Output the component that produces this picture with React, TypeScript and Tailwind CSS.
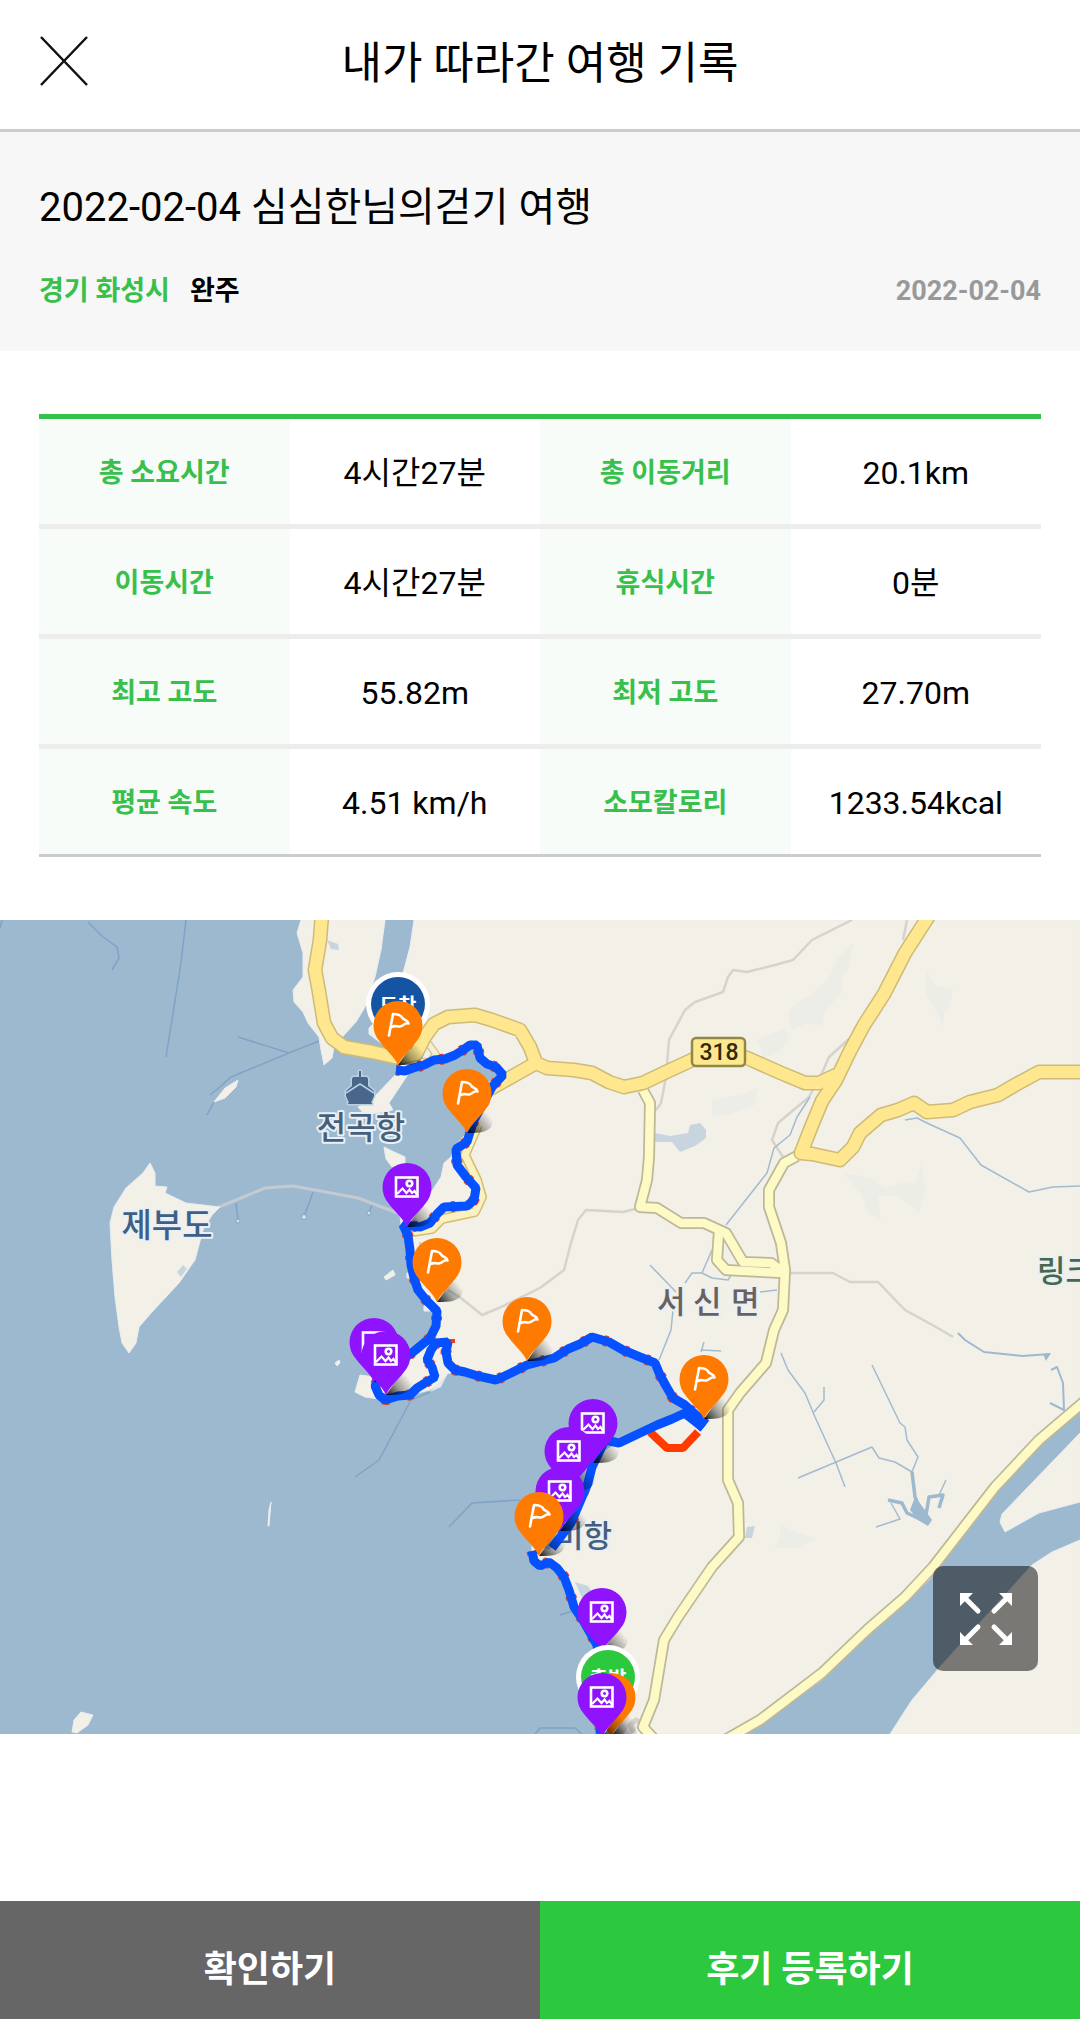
import React from "react";

type Point = { x: number; y: number };
type MarkerKind = "flag" | "photo";

const stats = [
  [
    { label: "총 소요시간", value: "4시간27분" },
    { label: "총 이동거리", value: "20.1km" },
  ],
  [
    { label: "이동시간", value: "4시간27분" },
    { label: "휴식시간", value: "0분" },
  ],
  [
    { label: "최고 고도", value: "55.82m" },
    { label: "최저 고도", value: "27.70m" },
  ],
  [
    { label: "평균 속도", value: "4.51 km/h" },
    { label: "소모칼로리", value: "1233.54kcal" },
  ],
];

// Later markers are drawn on top of earlier ones
const markers: (Point & { kind: MarkerKind })[] = [
  { kind: "flag", x: 398, y: 105 },
  { kind: "flag", x: 467, y: 173 },
  { kind: "photo", x: 407, y: 267 },
  { kind: "flag", x: 437, y: 342 },
  { kind: "flag", x: 527, y: 401 },
  { kind: "photo", x: 374, y: 422 },
  { kind: "photo", x: 386, y: 435 },
  { kind: "flag", x: 704, y: 459 },
  { kind: "photo", x: 593, y: 503 },
  { kind: "photo", x: 569, y: 531 },
  { kind: "photo", x: 560, y: 571 },
  { kind: "flag", x: 539, y: 596 },
  { kind: "photo", x: 602, y: 692 },
];

const ROUTE =
  "M396 150L405 151L413 148L424 145L434 140L445 139L455 135L463 130L470 125L477 125L480 138L487 144L496 147L503 155L492 167L474 200L470 212L467 222L456 229L457 245L466 257L476 268L474 280L467 286L444 287L437 294L430 303L420 307L403 305L408 316L410 330L411 345L414 358L418 370L426 380L437 391L436 406L430 418L413 432L380 455L375 466L379 475L385 480L398 476L410 475L417 468L425 463L435 457L432 447L427 440L431 430L436 423L448 422L446 432L448 443L455 450L465 452L478 456L496 460L511 453L527 445L554 438L568 429L580 424L592 417L609 422L623 430L640 437L655 443L660 455L666 466L673 478L685 485L705 503";

const ROUTE_BACK =
  "M703 508L695 500L685 493L672 499L657 505L640 513L619 523L605 520L592 547L588 563L571 603L552 628";

const ROUTE_SOUTH = "M532 631L534 641L540 646L549 642L557 648L564 657L569 670L574 687L584 702L597 725L602 770L600 814";

const MAJOR_ROADS = [
  "M322 -6L320 20L315 50L319 72L324 103L332 118L344 127L372 132L399 138L416 134L424 118L434 104L448 97L475 95L492 100L520 110L530 127L536 143L547 148L574 150L592 153L609 162L624 167L643 163L664 153L692 140L717 128L747 138L781 153L805 163L819 163L836 155",
  "M490 169L513 156L536 143",
  "M930 -6L905 33L884 74L864 105L850 131L836 160L822 181L812 205L801 233L812 234L840 240L853 227L860 213L881 195L898 190L914 183L927 192L953 190L970 182L998 175L1015 165L1039 152L1086 152",
];

const MINOR_ROADS = [
  "M643 170L650 183L649 237L647 260L640 287L657 288L681 303L704 303L726 313L743 342L771 343L783 352",
  "M719 311L717 340L726 350L783 353",
  "M797 236L784 243L769 270L769 287L781 323L785 350L783 390L774 410L766 443L740 473L728 490L728 560L738 583L739 617L712 647L678 697L664 720L654 780L643 807L655 820",
  "M725 820L760 800L822 753L867 710L905 677L933 647L995 567L1039 520L1086 480",
];

const COAST_ROAD = "M478 205L465 235L477 260L482 277L475 292L442 299L432 309L412 312";

const TRAILS =
  "M852 0L812 20L793 40L775 45L747 52L733 50L728 57L723 72L695 82L685 90L669 120L666 157L661 183L656 190M635 289L623 292L586 290L578 300L571 323L564 350L540 368L499 388L482 395L461 378L448 370M420 345L420 322M790 353L833 353L850 362L878 362L905 390L936 407L953 417M850 118L829 137L822 153L809 177L778 203L772 220L783 237M907 0L903 20";

const STREAMS =
  "M905 200L917 198L929 204L960 218L981 245L1029 272L1053 267L1080 266M810 177L797 197L790 215L774 228L767 253L726 305M712 330L702 353L692 353L685 363M650 345L676 372M702 353L712 358L728 360L733 352M673 390L671 410L665 425L659 440M704 422L701 432M702 430L721 431M781 433L788 450L805 473L815 497L836 543L845 567M824 467L824 480L814 492M798 558L872 527L879 538L895 542L912 552M872 445L900 503L905 507L907 520L918 537L912 552M876 607L900 599L891 583M946 560L939 575M760 372L777 370";

const WIDE_STREAMS =
  "M912 552L915 577L922 593L929 603M888 580L902 583L907 593L922 600M926 595L929 577L943 575L939 588";

const DITCHES = "M958 413L965 420L984 432L1022 436L1050 434M1051 450L1057 447L1063 463L1064 490L1050 483";

const SEA_LINES =
  "M88 2L103 17L117 27L119 38L112 50M186 0L181 43L166 137M238 117L289 133L319 121M289 133L231 157L220 167L210 175M214 182L207 195M236 283L238 300M313 272L304 297M372 285L369 293M430 472L411 480L379 540L355 557M449 607L472 583L520 580M535 814L540 808L575 808L582 814M2 0L0 8M560 695L576 690";

function PinShape({ x, y, color }: Point & { color: string }) {
  return (
    <g transform={`translate(${x} ${y})`}>
      <path d="M0 40L14 20C24 18 30 24 24 34C20 39 14 40 0 40Z" fill="url(#pin-shadow)" />
      <path d="M0 40C-4 31 -12 25 -18 17A24.5 24.5 0 1 1 18 17C12 25 4 31 0 40Z" fill={color} />
    </g>
  );
}

function Marker({ kind, x, y }: Point & { kind: MarkerKind }) {
  return (
    <g>
      <PinShape x={x} y={y} color={kind === "flag" ? "#ff7a00" : "#9013fe"} />
      <g transform={`translate(${x} ${y})`} fill="none" stroke="#fff" strokeWidth="2.600">
        {kind === "flag" ? (
          <path
            d="M-9 10.500L-5 -11C-1 -11 3 -10 4.500 -7C6 -4.500 9.500 -5.500 10.500 -1.500C7 -3 6 1 2 1.500C-1 1.800 -3 0 -6 2"
            strokeLinecap="round"
            strokeLinejoin="round"
          />
        ) : (
          <>
            <rect x="-11" y="-9.500" width="21.500" height="19" />
            <circle cx="2.500" cy="-3.500" r="2.800" />
            <path d="M-10 7L-4.500 1.500L-0.500 6L2.500 2.500L5 6L7.500 4L10 8" strokeWidth="2.200" />
          </>
        )}
      </g>
    </g>
  );
}

function EndPoint({ x, y, color, label }: Point & { color: string; label: string }) {
  return (
    <g>
      <path d={`M${x - 31} ${y}L${x - 4} ${y + 45}L${x + 31} ${y}Z`} fill="#fff" />
      <circle cx={x} cy={y} r="32" fill="#fff" />
      <circle cx={x} cy={y} r="27" fill={color} />
      <text x={x} y={y + 9} textAnchor="middle" fontSize="20" fontWeight="700" fill="#fff">
        {label}
      </text>
    </g>
  );
}

function RouteMap() {
  return (
    <svg viewBox="0 0 1080 814" className="block h-auto w-full" role="img" aria-label="여행 경로 지도">
      <defs>
        <linearGradient id="pin-shadow" x1="0" y1="1" x2="1" y2="0.4">
          <stop offset="0" stopColor="#000" stopOpacity="0.9" />
          <stop offset="0.5" stopColor="#000" stopOpacity="0.35" />
          <stop offset="1" stopColor="#000" stopOpacity="0" />
        </linearGradient>
      </defs>

      <rect width="1080" height="814" fill="#9db9d0" />
      <path d={SEA_LINES} fill="none" stroke="#7fa3c6" strokeWidth="1.500" />
      <path d="M219 287L241 278L265 268L293 266L331 273L358 278L403 295" fill="none" stroke="#c3cad2" strokeWidth="3" />
      <g fill="#d5e6f3" stroke="#7fa3c6">
        <circle cx="238" cy="301" r="2" />
        <circle cx="304" cy="297" r="2.500" />
        <circle cx="369" cy="293" r="2" />
      </g>

      {/* Land */}
      <g fill="#f3f0e8" stroke="#e9edf0" strokeWidth="1">
        <path d="M301 0L297 13L303 33L303 57L293 70L294 82L303 92L308 103L319 117L321 130L324 145L332 138L334 127L345 114L356 102L365 87L375 57L381 30L385 0Z" />
        <path d="M414 0L410 27L403 53L392 85L369 108L369 114L390 130L399 145L400 150L374 177L358 187L365 195L393 190L389 183L411 150L434 140L470 125L480 138L504 155L491 167L475 203L458 223L451 237L444 243L441 257L424 283L400 295L401 307L408 323L411 353L427 380L439 390L437 407L411 432L386 457L375 457L360 455L355 472L365 477L386 480L410 475L430 470L441 463L448 453L496 460L527 445L554 438L592 417L623 428L657 443L667 470L688 490L619 523L602 532L592 543L588 563L574 597L550 630L532 625L532 638L557 647L574 687L595 723L600 770L600 814L747 814L822 760L867 717L905 684L929 660L995 574L1039 527L1080 490V0Z" />
        <path d="M890 814L912 780L939 748L1032 645L1052 632L1080 620V814Z" />
        <path d="M1080 513L1002 594L1000 602L1005 612L1039 593L1080 582Z" />
        <path d="M150 243L143 253L126 268L114 287L110 303L112 340L115 377L119 407L122 423L129 433L136 423L139 407L152 392L179 363L195 340L203 310L212 295L220 287L186 283L165 273L167 267L155 266L155 253Z" />
        <path d="M214 182L225 168L238 160L236 167L225 178Z" />
        <path d="M384 227L390 230L405 237L405 243L392 247L386 239Z" />
        <path d="M384 357L393 350L395 355L386 360Z" />
        <path d="M407 353h6v5h-6zM424 386h6v5h-6zM335 443l4 -3l1 3l-3 3z" />
        <path d="M271 582L269 606L268 606L269 590Z" />
        <path d="M72 812L74 800L81 792L93 795L88 805L77 813Z" />
      </g>
      <path d="M430 472L448 453L441 467L430 472Z" fill="#dfe9ef" />

      {/* Woods and ponds */}
      <g fill="#ecede6">
        <path d="M853 23L848 50L842 58L842 72L826 90L822 105L806 104L791 110L788 93L797 82L809 77L828 60L838 38Z" />
        <path d="M926 50L936 66L953 70L950 85L944 92L943 107L936 90L926 75Z" />
        <path d="M757 120L785 108L790 118L778 133L764 138Z" />
        <path d="M712 180L740 175L757 168L755 185L730 194L712 197Z" />
        <path d="M843 253L871 258L885 268L905 262L915 263L922 243L925 270L919 293L898 276L878 276L881 300L867 292L862 275Z" />
        <path d="M780 605L795 612L815 618L800 628L775 628L780 618Z" />
      </g>
      <g fill="#c8d5df">
        <path d="M655 213L670 216L688 213L690 205L700 203L706 210L706 218L695 226L680 232L672 222L655 222Z" />
        <path d="M327 20L338 24L339 30L331 29ZM177 352L183 345L187 349L181 357ZM747 607L755 606L752 618L745 618Z" />
        <path d="M725 345L735 347L738 352L727 353ZM773 344L780 346L780 350ZM575 662L588 666L592 672L582 678Z" />
      </g>
      <path d={TRAILS} fill="none" stroke="#d6d3cd" strokeWidth="2.500" strokeLinejoin="round" />
      <path d={STREAMS} fill="none" stroke="#a3bbd0" strokeWidth="1.500" strokeLinejoin="round" />
      <path d={DITCHES} fill="none" stroke="#9db9d0" strokeWidth="2" strokeLinejoin="round" />
      <path d={WIDE_STREAMS} fill="none" stroke="#9db9d0" strokeWidth="3.500" strokeLinejoin="round" />
      <path d="M915 577L925 590L932 600L928 606L918 600L910 590ZM1043 434L1051 433L1046 441Z" fill="#9db9d0" />

      {/* Roads: casing first, then the fill */}
      <g fill="none" strokeLinejoin="round">
        <path d="M422 115L436 134L430 142L408 141" stroke="#cfc6a0" strokeWidth="8" />
        <path d="M422 115L436 134L430 142L408 141" stroke="#f5efcf" strokeWidth="5" />
        <path d="M635 814L630 805L636 800L645 805" stroke="#d6d3cd" strokeWidth="5" />
        {MINOR_ROADS.map((d) => (
          <path key={d} d={d} stroke="#bdb898" strokeWidth="12" />
        ))}
        {MINOR_ROADS.map((d) => (
          <path key={d} d={d} stroke="#fdfac6" strokeWidth="8.500" />
        ))}
        <path d={COAST_ROAD} stroke="#d3bd6e" strokeWidth="10" />
        <path d={COAST_ROAD} stroke="#fbf0c0" strokeWidth="7" />
        {MAJOR_ROADS.map((d) => (
          <path key={d} d={d} stroke="#cdbb77" strokeWidth="15" />
        ))}
        {MAJOR_ROADS.map((d) => (
          <path key={d} d={d} stroke="#fee78f" strokeWidth="12" />
        ))}
      </g>
      <rect x="692" y="118" width="53" height="28" rx="4" fill="#fbe88f" stroke="#938745" strokeWidth="2.500" />
      <text x="719" y="140" textAnchor="middle" fontSize="23" fontWeight="500" fill="#33290a">
        318
      </text>

      {/* Harbour icon */}
      <g fill="#48678a" stroke="#b9cfe1" strokeWidth="3" paintOrder="stroke" strokeLinejoin="round">
        <path d="M359 151h2v6h5q2 0 2 2v7l6 5v5l-3 7h1v1h-24v-1h1l-3 -7v-5l6 -5v-7q0 -2 2 -2h5z" />
      </g>
      <path d="M346 173L360 164L374 173" fill="none" stroke="#b9cfe1" strokeWidth="1.500" />

      <g fontWeight="500" stroke="#e8f0f6" strokeWidth="4" strokeLinejoin="round" paintOrder="stroke">
        <text x="361" y="219" textAnchor="middle" fontSize="32" fill="#46607c">전곡항</text>
        <text x="167" y="317" textAnchor="middle" fontSize="33" fill="#3f5f84">제부도</text>
        <text x="555" y="627" fontSize="31" fill="#46607c">미항</text>
        <text x="657 693 731" y="393" fontSize="31" fill="#6b605c">서신면</text>
        <text x="1037" y="362" fontSize="31" fill="#47684d">링크</text>
      </g>

      {/* Planned course in red, walked route in blue */}
      <g fill="none" strokeLinejoin="bevel">
        <path d="M650 512L667 528L683 528L698 512" stroke="#ff3b00" strokeWidth="8" />
        <path d="M448 421h7M588 569L586 575M577 598L576 603" stroke="#f03a22" strokeWidth="4" />
        <path d={ROUTE} stroke="#f03a22" strokeWidth="11" strokeDasharray="4 19" />
        <path d={ROUTE_SOUTH} stroke="#f03a22" strokeWidth="11" strokeDasharray="4 19" />
        <path d={ROUTE} stroke="#0551ff" strokeWidth="9" />
        <path d={ROUTE_BACK} stroke="#0551ff" strokeWidth="9" />
        <path d={ROUTE_SOUTH} stroke="#0551ff" strokeWidth="9" />
        <path d="M686 491L705 506" stroke="#0551ff" strokeWidth="14" />
      </g>

      <EndPoint x={398} y={84} color="#1553a3" label="도착" />
      {markers.map((m) => (
        <Marker key={`${m.x}-${m.y}`} kind={m.kind} x={m.x} y={m.y} />
      ))}
      <EndPoint x={608} y={757} color="#2cc83e" label="출발" />
      <PinShape x={611} y={777} color="#ff7a00" />
      <Marker kind="photo" x={602} y={777} />
    </svg>
  );
}

export default function App() {
  return (
    <div className="flex min-h-screen flex-col bg-white font-[Roboto,'Noto_Sans_CJK_KR',sans-serif] text-black">
      <header className="grid grid-cols-[1fr_auto_1fr] items-start border-b-[3px] border-[#cccccc] px-[39px] py-9">
        <button type="button" aria-label="닫기" className="w-[50px]">
          <svg viewBox="0 0 50 50" className="block h-[50px] w-[50px]" fill="none" stroke="#111" strokeWidth="2.500">
            <path d="M2 1L48 49M48 1L2 49" />
          </svg>
        </button>
        <h1 className="text-[44px] leading-[57px]">내가 따라간 여행 기록</h1>
      </header>

      <section className="bg-[#f7f7f7] px-[39px] pt-12 pb-10">
        <h2 className="text-[40px] leading-[55px]">2022-02-04 심심한님의걷기 여행</h2>
        <div className="mt-9 flex items-center gap-5 text-[27px] leading-10 font-bold">
          <span className="text-[#38c04c]">경기 화성시</span>
          <span>완주</span>
          <time dateTime="2022-02-04" className="ml-auto text-[#999999]">2022-02-04</time>
        </div>
      </section>

      <main>
        <div className="px-[39px] py-[63px]">
          <table className="w-full table-fixed border-separate border-spacing-0 border-t-[5px] border-b-[3px] border-t-[#38c04c] border-b-[#cccccc] text-center">
            <tbody>
              {stats.map((row) => (
                <tr key={row[0].label} className="[&:not(:last-child)>*]:border-b-[5px]">
                  {row.map((item) => (
                    <React.Fragment key={item.label}>
                      <th scope="row" className="border-[#ededed] bg-[#f7fcf9] pt-[34px] pb-[30px] text-[27px] leading-[41px] font-bold text-[#38c04c]">
                        {item.label}
                      </th>
                      <td className="border-[#ededed] pt-[34px] pb-[30px] text-[32px] leading-[41px]">{item.value}</td>
                    </React.Fragment>
                  ))}
                </tr>
              ))}
            </tbody>
          </table>
        </div>

        <div className="relative">
          <RouteMap />
          <button
            type="button"
            aria-label="지도 크게 보기"
            className="absolute right-[42px] bottom-[63px] flex h-[105px] w-[105px] items-center justify-center rounded-[10px] bg-black/50"
          >
            <svg viewBox="0 0 54 54" className="h-[54px] w-[54px]" fill="#fff" stroke="#fff">
              <path d="M1 1H14L1 14ZM53 1V14L40 1ZM1 53V40L14 53ZM53 53H40L53 40Z" stroke="none" />
              <path d="M6 6L19 19M48 6L35 19M6 48L19 35M48 48L35 35" strokeWidth="5" strokeLinecap="round" />
            </svg>
          </button>
        </div>
      </main>

      <footer className="mt-auto grid grid-cols-2 text-[36px] leading-[54px] font-bold text-white">
        <button type="button" className="bg-[#666666] pt-[42px] pb-[22px]">확인하기</button>
        <button type="button" className="bg-[#2cc83e] pt-[42px] pb-[22px]">후기 등록하기</button>
      </footer>
    </div>
  );
}
